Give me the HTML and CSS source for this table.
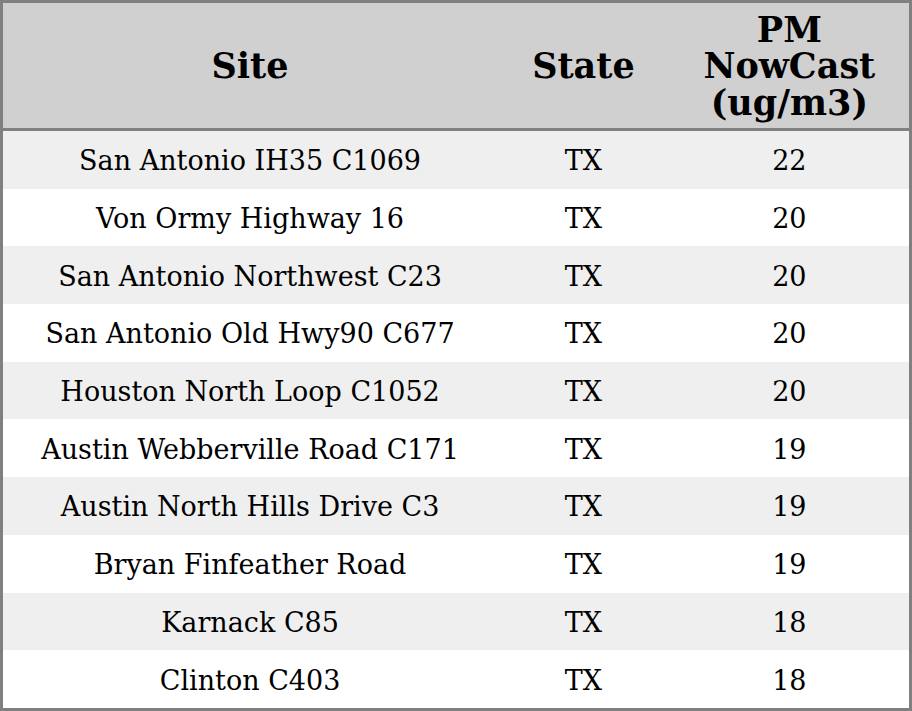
FILE: index.html
```html
<!DOCTYPE html>
<html>
<head>
<meta charset="utf-8">
<link rel="stylesheet" href="styles.css">
</head>
<body>
<table class="aq">
  <colgroup>
    <col class="c-site">
    <col class="c-state">
    <col class="c-pm">
  </colgroup>
  <thead>
    <tr><th>Site</th><th>State</th><th>PM<br>NowCast<br>(ug/m3)</th></tr>
  </thead>
  <tbody>
    <tr><td>San Antonio IH35 C1069</td><td>TX</td><td>22</td></tr>
    <tr><td>Von Ormy Highway 16</td><td>TX</td><td>20</td></tr>
    <tr><td>San Antonio Northwest C23</td><td>TX</td><td>20</td></tr>
    <tr><td>San Antonio Old Hwy90 C677</td><td>TX</td><td>20</td></tr>
    <tr><td>Houston North Loop C1052</td><td>TX</td><td>20</td></tr>
    <tr><td>Austin Webberville Road C171</td><td>TX</td><td>19</td></tr>
    <tr><td>Austin North Hills Drive C3</td><td>TX</td><td>19</td></tr>
    <tr><td>Bryan Finfeather Road</td><td>TX</td><td>19</td></tr>
    <tr><td>Karnack C85</td><td>TX</td><td>18</td></tr>
    <tr><td>Clinton C403</td><td>TX</td><td>18</td></tr>
  </tbody>
</table>
</body>
</html>
```
FILE: styles.css
```css
html, body {
  margin: 0;
  padding: 0;
  height: 100%;
  background: #ffffff;
}
.aq {
  width: 912px;
  height: 711px;
  border-collapse: collapse;
  table-layout: fixed;
  border: 3px solid #808080;
  font-family: "DejaVu Serif", serif;
  color: #000;
}
.c-site { width: 494px; }
.c-state { width: 172px; }
.c-pm { width: 240px; }
.aq th {
  background: #d0d0d0;
  font-size: 35px;
  font-weight: bold;
  line-height: 36.5px;
  height: 123px;
  padding: 2px 0 0;
  text-align: center;
  border-bottom: 3px solid #808080;
}
.aq td {
  font-size: 27px;
  text-align: center;
  padding: 2px 0 0;
  height: 55px;
}
.aq tbody tr:nth-child(odd) td { background: #efefef; }
.aq tbody tr:nth-child(even) td { background: #ffffff; }
```
